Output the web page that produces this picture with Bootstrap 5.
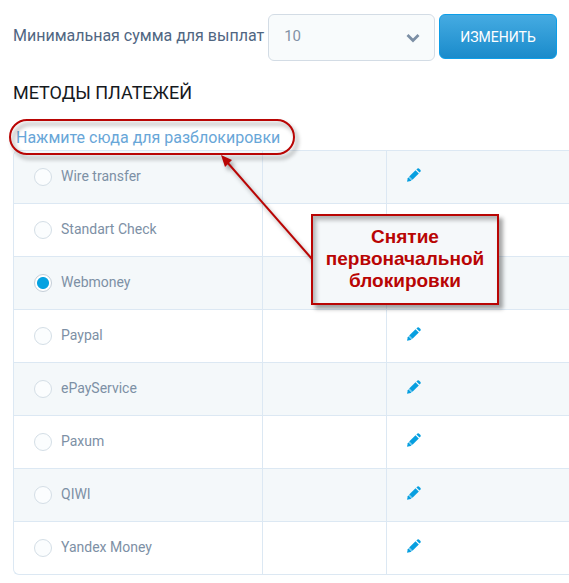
<!DOCTYPE html>
<html lang="ru">
<head>
<meta charset="utf-8">
<meta name="viewport" content="width=device-width, initial-scale=1">
<title>Методы платежей</title>
<link href="https://cdn.jsdelivr.net/npm/bootstrap@5.3.0/dist/css/bootstrap.min.css" rel="stylesheet">
<style>
body { font-family: Roboto, "Liberation Sans", sans-serif; color: #7d90a8; background: #fff; }
.page { padding: 14px 0 8px 13px; overflow: hidden; }
.amount-label { font-size: 16px; line-height: 24px; color: #506682; margin-top: 10px; }
.amount-select { width: 167px; height: 47px; font-size: 15px; color: #8292a6; background-color: #f8fbfc; border: 1px solid #d3dce5; border-radius: 6px; padding: 0 36px 2px 15px;
  background-image: url("data:image/svg+xml,%3Csvg xmlns='http://www.w3.org/2000/svg' viewBox='0 0 14 10'%3E%3Cpath d='M1.500 2l5.500 5.500L12.500 2' fill='none' stroke='%237c8fa5' stroke-width='2.800'/%3E%3C/svg%3E"); background-size: 14px 10px; background-position: right 14px center; }
.btn-change { height: 45px; padding: 1px 20px 0; font-size: 14px; color: #fff; border: 1px solid #0c9ee8; border-radius: 6px; background: linear-gradient(#45abe2, #1a8bcb); }
.btn-change:hover { color: #fff; background: #1a8bcb; }
.section-title { font-size: 18px; line-height: 24px; font-weight: 400; color: #15191d; margin: 20px 0 0; }
.unlock { font-size: 16px; line-height: 24px; margin: 21px 0 0 3px; }
.unlock a { color: #68a6d8; text-decoration: none; }
.ring { left: -7px; right: -15px; top: -7px; height: 36px; border: 2px solid #b90504; border-radius: 18px; filter: drop-shadow(3px 4px 2px rgba(0,0,0,.4)); pointer-events: none; z-index: 2; }
.methods-wrap { border: 1px solid #dce8f3; border-right: 0; border-radius: 6px 0 0 6px; }
.methods { table-layout: fixed; border-collapse: separate; border-spacing: 0; font-size: 14px; line-height: 20px; }
.methods td { height: 53px; padding: 0 20px; border: 0; border-bottom: 1px solid #dce8f3; vertical-align: middle; }
.methods td + td { border-left: 1px solid #dce8f3; }
.methods tr:nth-child(odd) td { background: #f4f8fa; }
.methods tr:first-child td:first-child { border-top-left-radius: 5px; }
.methods tr:last-child td { border-bottom: 0; height: 52px; }
.col-method { width: 248px; }
.col-info { width: 124px; }
.method-line { gap: 9px; }
.pick { appearance: none; width: 18px; height: 18px; margin: 0; border: 1px solid #d4dee6; border-radius: 50%; background: #fbfdfe; flex: none; }
.pick:checked { border-color: #c5cfd8; background: radial-gradient(circle, #05a2e1 5.5px, #fff 6.5px); }
.method-label { color: #7d90a5; padding-bottom: 2px; }
.edit { display: block; padding: 0; border: 0; background: none; color: #069fe0; line-height: 0; margin-bottom: 5px; }
.note { left: 297px; top: 63px; width: 188px; height: 91px; padding: 10px 0; background: #f5f8fa; border: 2px solid #b90504; color: #b90504; font: bold 19px/22px "Liberation Sans", Arial, sans-serif; box-shadow: 4px 4px 4px rgba(0,0,0,.35), inset 3px 4px 4px rgba(0,0,0,.28); z-index: 3; }
.arrow { left: 196px; top: -2px; filter: drop-shadow(3px 4px 2px rgba(0,0,0,.35)); pointer-events: none; z-index: 3; }
</style>
</head>
<body>
<main class="page">
  <form class="d-flex align-items-start gap-1">
    <label class="amount-label text-nowrap" for="amount">Минимальная сумма для выплат</label>
    <select class="form-select amount-select flex-shrink-0" id="amount"><option>10</option></select>
    <button class="btn btn-change flex-shrink-0" type="button">ИЗМЕНИТЬ</button>
  </form>
  <h2 class="section-title">МЕТОДЫ ПЛАТЕЖЕЙ</h2>
  <div class="d-flex"><div class="unlock position-relative"><a href="#">Нажмите сюда для разблокировки</a><span class="ring position-absolute"></span></div></div>
  <div class="methods-wrap position-relative">
    <table class="methods table mb-0">
      <colgroup><col class="col-method"><col class="col-info"><col></colgroup>
      <tbody id="rows"></tbody>
    </table>
    <svg class="arrow position-absolute" width="112" height="116" viewBox="0 0 112 116" aria-hidden="true"><path d="M17 13L102 110" stroke="#b90504" stroke-width="2"/><path d="M11 6L22 11L15 18Z" fill="#b90504"/></svg>
    <div class="note position-absolute text-center">Снятие<br>первоначальной<br>блокировки</div>
  </div>
</main>
<script src="https://cdn.jsdelivr.net/npm/bootstrap@5.3.0/dist/js/bootstrap.bundle.min.js"></script>
<script>
const methods = ['Wire transfer', 'Standart Check', 'Webmoney', 'Paypal', 'ePayService', 'Paxum', 'QIWI', 'Yandex Money'];
document.getElementById('rows').innerHTML = methods.map((name, i) => `
  <tr>
    <td><div class="method-line d-flex align-items-center"><input class="pick" type="radio" name="method" id="m${i}"${name === 'Webmoney' ? ' checked' : ''}><label class="method-label" for="m${i}">${name}</label></div></td>
    <td></td>
    <td><button class="edit" type="button" aria-label="${name}"><svg width="14" height="14" viewBox="0 0 14 14" fill="currentColor"><path d="M0 13.800L.8 10.300L2.200 9L5 11.800L3.700 13Z"/><path d="M2.200 8.500L8.500 2.200L11.800 5.500L5.500 11.800Z"/><path d="M9.400 1.500L10.500 .4Q11.200 0 11.900 .5L13.500 2.100Q14 2.800 13.600 3.500L12.500 4.600Z"/><path d="M1.900 9.500L4.500 12.100" stroke="#fff" stroke-width=".6"/></svg></button></td>
  </tr>`).join('');
</script>
</body>
</html>
